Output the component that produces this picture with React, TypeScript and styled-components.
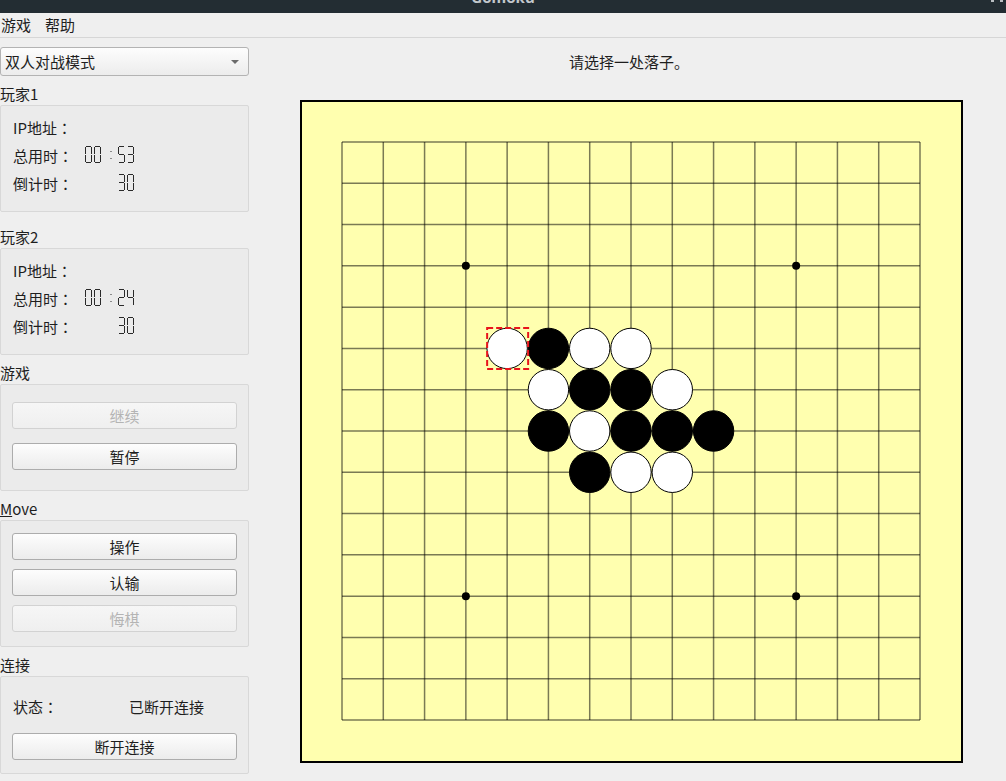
import React from 'react';
import styled, { createGlobalStyle } from 'styled-components';

const GlobalStyle = createGlobalStyle`
    html, body {
        margin: 0;
        padding: 0;
        background: #efefef;
    }

    body {
        font-family: 'Noto Sans CJK SC', 'Noto Sans', sans-serif;
        font-size: 15px;
        color: #1e1e1e;
    }
`;

const Window = styled.div`
    display: flex;
    flex-direction: column;

    width: 1006px;
    height: 781px;
    overflow: hidden;
`;

const TitleBar = styled.div`
    position: relative;
    height: 13px;
    overflow: hidden;
    background: #232d33;
    color: #c3c8cc;
    text-align: center;
    font-family: 'Noto Sans', sans-serif;
    font-weight: bold;
    font-size: 15px;
    line-height: 13px;
`;

const TitleText = styled.div`
    margin-top: -9px;
`;

const WinButton = styled.span<{ $right: number }>`
    position: absolute;
    top: 0;
    right: ${(p) => p.$right}px;
    width: 3px;
    height: 2px;
    background: #b9bec2;
`;

const MenuBar = styled.div`
    display: flex;
    gap: 14px;

    height: 24px;
    padding: 0 0 0 1px;
    border-bottom: 1px solid #d6d6d6;
    line-height: 24px;
`;

const MenuItem = styled.span``;

const Body = styled.div`
    display: flex;
    flex: 1;
`;

const Side = styled.div`
    display: flex;
    flex-direction: column;

    width: 250px;
    padding-top: 9px;
`;

const Combo = styled.div`
    display: flex;
    align-items: center;
    justify-content: space-between;

    height: 27px;
    margin-right: 1px;
    padding: 0 9px 0 4px;
    border: 1px solid #b3b3b3;
    border-radius: 3px;
    background: linear-gradient(#fdfdfd, #ececec);
`;

const Arrow = styled.span`
    width: 0;
    height: 0;
    border-left: 4px solid transparent;
    border-right: 4px solid transparent;
    border-top: 4px solid #6b6b6b;
`;

const GroupLabel = styled.div<{ $top: number }>`
    height: 20px;
    margin-top: ${(p) => p.$top}px;
    line-height: 17px;
`;

const GroupBox = styled.div<{ $height: number; $padTop: number; $gap: number }>`
    display: flex;
    flex-direction: column;
    gap: ${(p) => p.$gap}px;

    box-sizing: border-box;
    height: ${(p) => p.$height}px;
    margin-right: 1px;
    padding: ${(p) => p.$padTop}px 11px 0 11px;
    border: 1px solid #d8d8d8;
    border-radius: 2px;
    background: #ebebeb;
`;

const InfoRow = styled.div`
    display: flex;
    align-items: center;

    height: 28px;
    padding-left: 1px;
`;

const InfoKey = styled.span`
    width: 71px;
`;

const Colon = styled.span`
    font-family: 'Noto Sans CJK JP', 'Noto Sans CJK SC', sans-serif;
`;

const InfoValue = styled.span`
    margin-left: 45px;
`;

const Button = styled.div<{ $disabled?: boolean }>`
    box-sizing: border-box;
    height: 27px;
    border: 1px solid ${(p) => (p.$disabled ? '#d2d2d2' : '#acacac')};
    border-radius: 3px;
    background: ${(p) =>
        p.$disabled ? 'linear-gradient(#f6f6f6, #efefef)' : 'linear-gradient(#fdfdfd, #ececec)'};
    color: ${(p) => (p.$disabled ? '#b4b4b4' : '#1e1e1e')};
    text-align: center;
    line-height: 25px;
`;

const Main = styled.div`
    display: flex;
    flex-direction: column;
    flex: 1;
    align-items: center;
`;

const Status = styled.div`
    height: 30px;
    margin: 9px 0 0 2px;
    line-height: 30px;
`;

const Board = styled.div`
    box-sizing: border-box;
    width: 663px;
    height: 663px;
    margin: 23px 0 0 7px;
    border: 2px solid #000;
    background: #ffffaf;
`;

const SEGS: Record<string, string> = {
    '0': 'abcdef',
    '1': 'bc',
    '2': 'abged',
    '3': 'abgcd',
    '4': 'fgbc',
    '5': 'afgcd',
    '6': 'afgedc',
    '7': 'abc',
    '8': 'abcdefg',
    '9': 'abcdfg',
};

const Digit = ({ ch, x }: { ch: string; x: number }) => {
    const w = 7;
    const h = 17;
    const m = h / 2;
    const lines: Record<string, [number, number, number, number]> = {
        a: [x + 1, 0.5, x + w - 1, 0.5],
        b: [x + w - 0.5, 1, x + w - 0.5, m - 0.5],
        c: [x + w - 0.5, m + 0.5, x + w - 0.5, h - 1],
        d: [x + 1, h - 0.5, x + w - 1, h - 0.5],
        e: [x + 0.5, m + 0.5, x + 0.5, h - 1],
        f: [x + 0.5, 1, x + 0.5, m - 0.5],
        g: [x + 1, m, x + w - 1, m],
    };
    return (
        <g>
            {(SEGS[ch] || '').split('').map((s) => {
                const [x1, y1, x2, y2] = lines[s];
                return <line key={s} x1={x1} y1={y1} x2={x2} y2={y2} stroke="#2a2a2a" strokeWidth={1} />;
            })}
        </g>
    );
};

const Lcd = ({ text }: { text: string }) => {
    // five cells, right aligned like QLCDNumber
    const cells = text.padStart(5, ' ').split('');
    const xs = [0, 9, 25, 33, 42];
    return (
        <svg width={50} height={18} viewBox="0 0 50 18">
            {cells.map((c, i) =>
                c === ':' ? (
                    <g key={i}>
                        <rect x={25.5} y={5} width={1} height={1} fill="#2a2a2a" />
                        <rect x={25.5} y={12} width={1} height={1} fill="#2a2a2a" />
                    </g>
                ) : (
                    <Digit key={i} ch={c} x={xs[i] === 25 ? 17 : xs[i]} />
                ),
            )}
        </svg>
    );
};

const LcdWrap = styled.span`
    display: flex;
    margin-left: 1px;
`;

const N = 15;
const START = 40;
const END = 618;
const STEP = (END - START) / (N - 1);

type Stone = [number, number, 'b' | 'w'];

const stones: Stone[] = [
    [4, 5, 'w'],
    [5, 5, 'b'],
    [6, 5, 'w'],
    [7, 5, 'w'],
    [5, 6, 'w'],
    [6, 6, 'b'],
    [7, 6, 'b'],
    [8, 6, 'w'],
    [5, 7, 'b'],
    [6, 7, 'w'],
    [7, 7, 'b'],
    [8, 7, 'b'],
    [9, 7, 'b'],
    [6, 8, 'b'],
    [7, 8, 'w'],
    [8, 8, 'w'],
];

const stars = [
    [3, 3],
    [11, 3],
    [3, 11],
    [11, 11],
];

const pos = (i: number) => START + i * STEP;

const BoardDrawing = () => (
    <svg width={659} height={659} viewBox="0 0 659 659">
        {Array.from({ length: N }).map((_, i) => (
            <g key={i} stroke="rgba(0,0,0,0.52)" strokeWidth={1.5}>
                <line x1={pos(i)} y1={START} x2={pos(i)} y2={END} />
                <line x1={START} y1={pos(i)} x2={END} y2={pos(i)} />
            </g>
        ))}
        {stars.map(([c, r]) => (
            <circle key={`${c}-${r}`} cx={pos(c)} cy={pos(r)} r={4} fill="#000" />
        ))}
        {stones.map(([c, r, color]) => (
            <circle
                key={`${c}-${r}`}
                cx={pos(c)}
                cy={pos(r)}
                r={20.2}
                fill={color === 'b' ? '#000' : '#fff'}
                stroke="#000"
                strokeWidth={1}
            />
        ))}
        <rect
            x={pos(4) - 20}
            y={pos(5) - 20.5}
            width={41}
            height={41}
            fill="none"
            stroke="#e8141c"
            strokeWidth={2}
            strokeDasharray="6 3"
        />
    </svg>
);

const Key = ({ label }: { label: string }) => (
    <InfoKey>
        {label}
        <Colon>：</Colon>
    </InfoKey>
);

export default function App() {
    return (
        <Window>
            <GlobalStyle />
            <TitleBar>
                <TitleText>Gomoku</TitleText>
                <WinButton $right={12} />
                <WinButton $right={3} />
            </TitleBar>
            <MenuBar>
                <MenuItem>游戏</MenuItem>
                <MenuItem>帮助</MenuItem>
            </MenuBar>
            <Body>
                <Side>
                    <Combo>
                        <span>双人对战模式</span>
                        <Arrow />
                    </Combo>

                    <GroupLabel $top={9}>玩家1</GroupLabel>
                    <GroupBox $height={107} $padTop={7} $gap={0}>
                        <InfoRow>
                            <Key label="IP地址" />
                        </InfoRow>
                        <InfoRow>
                            <Key label="总用时" />
                            <LcdWrap>
                                <Lcd text="00:53" />
                            </LcdWrap>
                        </InfoRow>
                        <InfoRow>
                            <Key label="倒计时" />
                            <LcdWrap>
                                <Lcd text="30" />
                            </LcdWrap>
                        </InfoRow>
                    </GroupBox>

                    <GroupLabel $top={16}>玩家2</GroupLabel>
                    <GroupBox $height={107} $padTop={7} $gap={0}>
                        <InfoRow>
                            <Key label="IP地址" />
                        </InfoRow>
                        <InfoRow>
                            <Key label="总用时" />
                            <LcdWrap>
                                <Lcd text="00:24" />
                            </LcdWrap>
                        </InfoRow>
                        <InfoRow>
                            <Key label="倒计时" />
                            <LcdWrap>
                                <Lcd text="30" />
                            </LcdWrap>
                        </InfoRow>
                    </GroupBox>

                    <GroupLabel $top={9}>游戏</GroupLabel>
                    <GroupBox $height={107} $padTop={17} $gap={14}>
                        <Button $disabled>继续</Button>
                        <Button>暂停</Button>
                    </GroupBox>

                    <GroupLabel $top={9}>
                        <u>M</u>ove
                    </GroupLabel>
                    <GroupBox $height={127} $padTop={12} $gap={9}>
                        <Button>操作</Button>
                        <Button>认输</Button>
                        <Button $disabled>悔棋</Button>
                    </GroupBox>

                    <GroupLabel $top={9}>连接</GroupLabel>
                    <GroupBox $height={98} $padTop={15} $gap={13}>
                        <InfoRow>
                            <Key label="状态" />
                            <InfoValue>已断开连接</InfoValue>
                        </InfoRow>
                        <Button>断开连接</Button>
                    </GroupBox>
                </Side>

                <Main>
                    <Status>请选择一处落子。</Status>
                    <Board>
                        <BoardDrawing />
                    </Board>
                </Main>
            </Body>
        </Window>
    );
}
